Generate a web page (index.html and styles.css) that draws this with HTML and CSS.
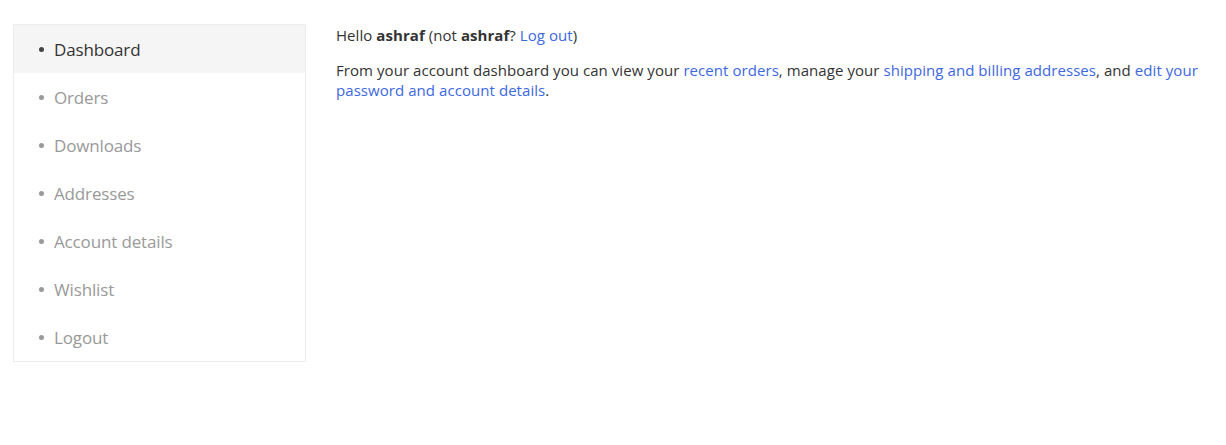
FILE: index.html
```html
<!DOCTYPE html>
<html>
<head>
<meta charset="utf-8">
<link rel="stylesheet" href="styles.css">
</head>
<body>
<div class="account">
  <nav class="account-nav">
    <ul>
      <li class="active"><a href="#">Dashboard</a></li>
      <li><a href="#">Orders</a></li>
      <li><a href="#">Downloads</a></li>
      <li><a href="#">Addresses</a></li>
      <li><a href="#">Account details</a></li>
      <li><a href="#">Wishlist</a></li>
      <li><a href="#">Logout</a></li>
    </ul>
  </nav>
  <div class="account-content">
    <p>Hello <strong>ashraf</strong> (not <strong>ashraf</strong>? <a href="#">Log out</a>)</p>
    <p>From your account dashboard you can view your <a href="#">recent orders</a>, manage your <a href="#">shipping and billing addresses</a>, and <a href="#">edit your password and account details</a>.</p>
  </div>
</div>
</body>
</html>
```

FILE: styles.css
```css
html, body {
  margin: 0;
  padding: 0;
  background: #fff;
}
body {
  font-family: "Open Sans", "Noto Sans", sans-serif;
  color: #333;
}
.account {
  display: flex;
  align-items: flex-start;
  gap: 30px;
  padding: 24px 8px 0 13px;
}
.account-nav {
  flex: 0 0 293px;
  box-sizing: border-box;
  border: 1px solid #ececec;
}
.account-nav ul {
  list-style: none;
  margin: 0;
  padding: 0;
}
.account-nav li {
  height: 48px;
  display: flex;
  align-items: center;
  padding-left: 25px;
  font-size: 17px;
  letter-spacing: -0.15px;
}
.account-nav li::before {
  content: "";
  flex: 0 0 5px;
  height: 5px;
  border-radius: 50%;
  background: #999;
  margin-right: 10px;
}
.account-nav li a {
  color: #999;
  text-decoration: none;
}
.account-nav li.active {
  background: #f5f5f5;
}
.account-nav li.active::before {
  background: #444;
}
.account-nav li.active a {
  color: #333;
}
.account-content {
  flex: 1;
  font-size: 15px;
  line-height: 20px;
  letter-spacing: 0.06px;
}
.account-content p {
  margin: 0 0 15px;
}
.account-content p:first-child {
  margin-top: 1px;
}
.account-content a {
  color: #3d68e0;
  text-decoration: none;
}
.account-content strong {
  font-weight: 700;
}
```
